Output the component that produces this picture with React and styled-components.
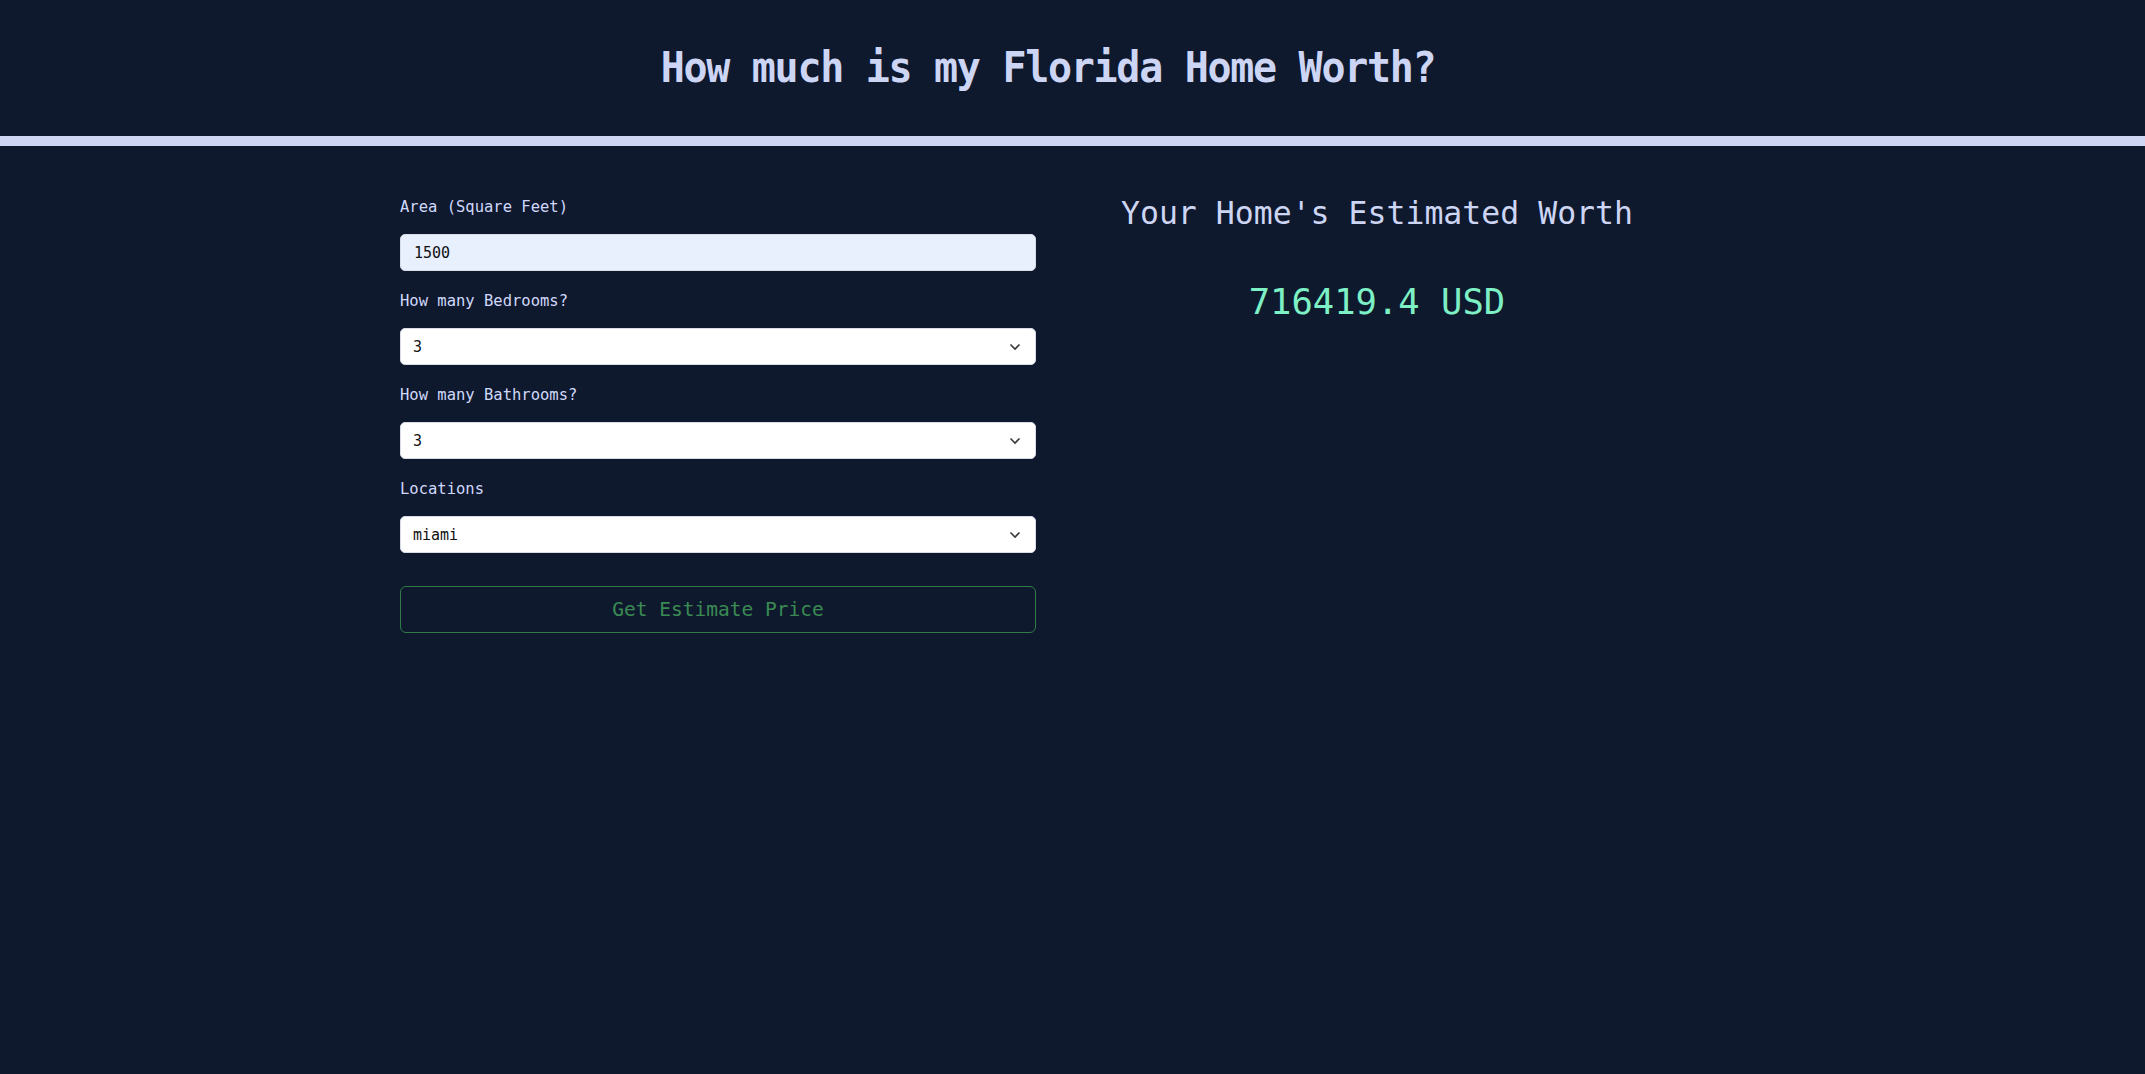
import React, { useState } from "react";
import styled, { createGlobalStyle } from "styled-components";

const Global = createGlobalStyle`
  html, body {
    margin: 0;
    padding: 0;
    background: #0f192d;
  }
  body {
    font-family: "DejaVu Sans Mono", "Liberation Mono", monospace;
    min-height: 100vh;
  }
  * { box-sizing: border-box; }
`;

const Page = styled.div`
  min-height: 100vh;
  background: #0f192d;
  color: #cdd5f4;
`;

const Header = styled.header`
  height: 146px;
  display: flex;
  align-items: center;
  justify-content: center;
  padding: 0 49px 2px 0;
  border-bottom: 10px solid #cfd6f3;
`;

const Title = styled.h1`
  margin: 0;
  font-size: 40px;
  font-weight: 700;
  color: #cdd5f4;
  letter-spacing: -1.3px;
  transform: scaleY(1.08);
`;

const Main = styled.main`
  width: 1345px;
  margin: 0 auto;
  padding-top: 48px;
  display: grid;
  grid-template-columns: 636px 636px;
  column-gap: 23px;
  align-items: start;
`;

const Form = styled.form`
  display: flex;
  flex-direction: column;
  padding-top: 3px;
`;

const Label = styled.label`
  display: block;
  font-size: 15.5px;
  line-height: 20px;
  color: #cfd8fb;
  margin-top: ${(p) => (p.$first ? "0" : "20px")};
  margin-bottom: 17px;
`;

const Input = styled.input`
  width: 100%;
  height: 37px;
  border: 1px solid #d7dce6;
  border-radius: 5px;
  background: #e8f0fe;
  padding: 0 13px;
  font-family: inherit;
  font-size: 15px;
  color: #111;
  outline: none;
`;

const SelectWrap = styled.div`
  position: relative;
  width: 100%;
`;

const Select = styled.select`
  width: 100%;
  height: 37px;
  appearance: none;
  -webkit-appearance: none;
  border: 1px solid #d7dce6;
  border-radius: 5px;
  background: #ffffff;
  padding: 0 12px;
  font-family: inherit;
  font-size: 15px;
  color: #111;
  outline: none;
`;

const Chevron = styled.svg`
  position: absolute;
  right: 15px;
  top: 50%;
  transform: translateY(-50%);
  pointer-events: none;
`;

const Button = styled.button`
  margin-top: 33px;
  width: 100%;
  height: 47px;
  background: transparent;
  border: 1px solid #2f7c47;
  border-radius: 6px;
  color: #3a8a53;
  font-family: inherit;
  font-size: 19.5px;
  cursor: pointer;
`;

const Result = styled.section`
  display: flex;
  flex-direction: column;
  align-items: center;
`;

const ResultTitle = styled.h2`
  margin: 0;
  font-size: 31.5px;
  line-height: 38px;
  font-weight: 400;
  color: #cdd5f4;
`;

const Price = styled.div`
  margin-top: 48px;
  font-size: 35.5px;
  line-height: 43px;
  color: #7df0c6;
`;

function ChevronIcon() {
  return (
    <Chevron width="12" height="8" viewBox="0 0 12 8" fill="none">
      <polyline points="1.5,1.5 6,6 10.5,1.5" stroke="#3a3a3a" strokeWidth="1.6" fill="none" />
    </Chevron>
  );
}

function Field({ label, first, children }) {
  return (
    <>
      <Label $first={first}>{label}</Label>
      {children}
    </>
  );
}

export default function App() {
  const [area, setArea] = useState("1500");
  const [beds, setBeds] = useState("3");
  const [baths, setBaths] = useState("3");
  const [loc, setLoc] = useState("miami");

  return (
    <Page>
      <Global />
      <Header>
        <Title>How much is my Florida Home Worth?</Title>
      </Header>
      <Main>
        <Form onSubmit={(e) => e.preventDefault()}>
          <Field label="Area (Square Feet)" first>
            <Input value={area} onChange={(e) => setArea(e.target.value)} />
          </Field>
          <Field label="How many Bedrooms?">
            <SelectWrap>
              <Select value={beds} onChange={(e) => setBeds(e.target.value)}>
                {[1, 2, 3, 4, 5].map((n) => (
                  <option key={n} value={String(n)}>{n}</option>
                ))}
              </Select>
              <ChevronIcon />
            </SelectWrap>
          </Field>
          <Field label="How many Bathrooms?">
            <SelectWrap>
              <Select value={baths} onChange={(e) => setBaths(e.target.value)}>
                {[1, 2, 3, 4, 5].map((n) => (
                  <option key={n} value={String(n)}>{n}</option>
                ))}
              </Select>
              <ChevronIcon />
            </SelectWrap>
          </Field>
          <Field label="Locations">
            <SelectWrap>
              <Select value={loc} onChange={(e) => setLoc(e.target.value)}>
                {["miami", "orlando", "tampa", "jacksonville"].map((n) => (
                  <option key={n} value={n}>{n}</option>
                ))}
              </Select>
              <ChevronIcon />
            </SelectWrap>
          </Field>
          <Button type="submit">Get Estimate Price</Button>
        </Form>
        <Result>
          <ResultTitle>Your Home's Estimated Worth</ResultTitle>
          <Price>716419.4 USD</Price>
        </Result>
      </Main>
    </Page>
  );
}
